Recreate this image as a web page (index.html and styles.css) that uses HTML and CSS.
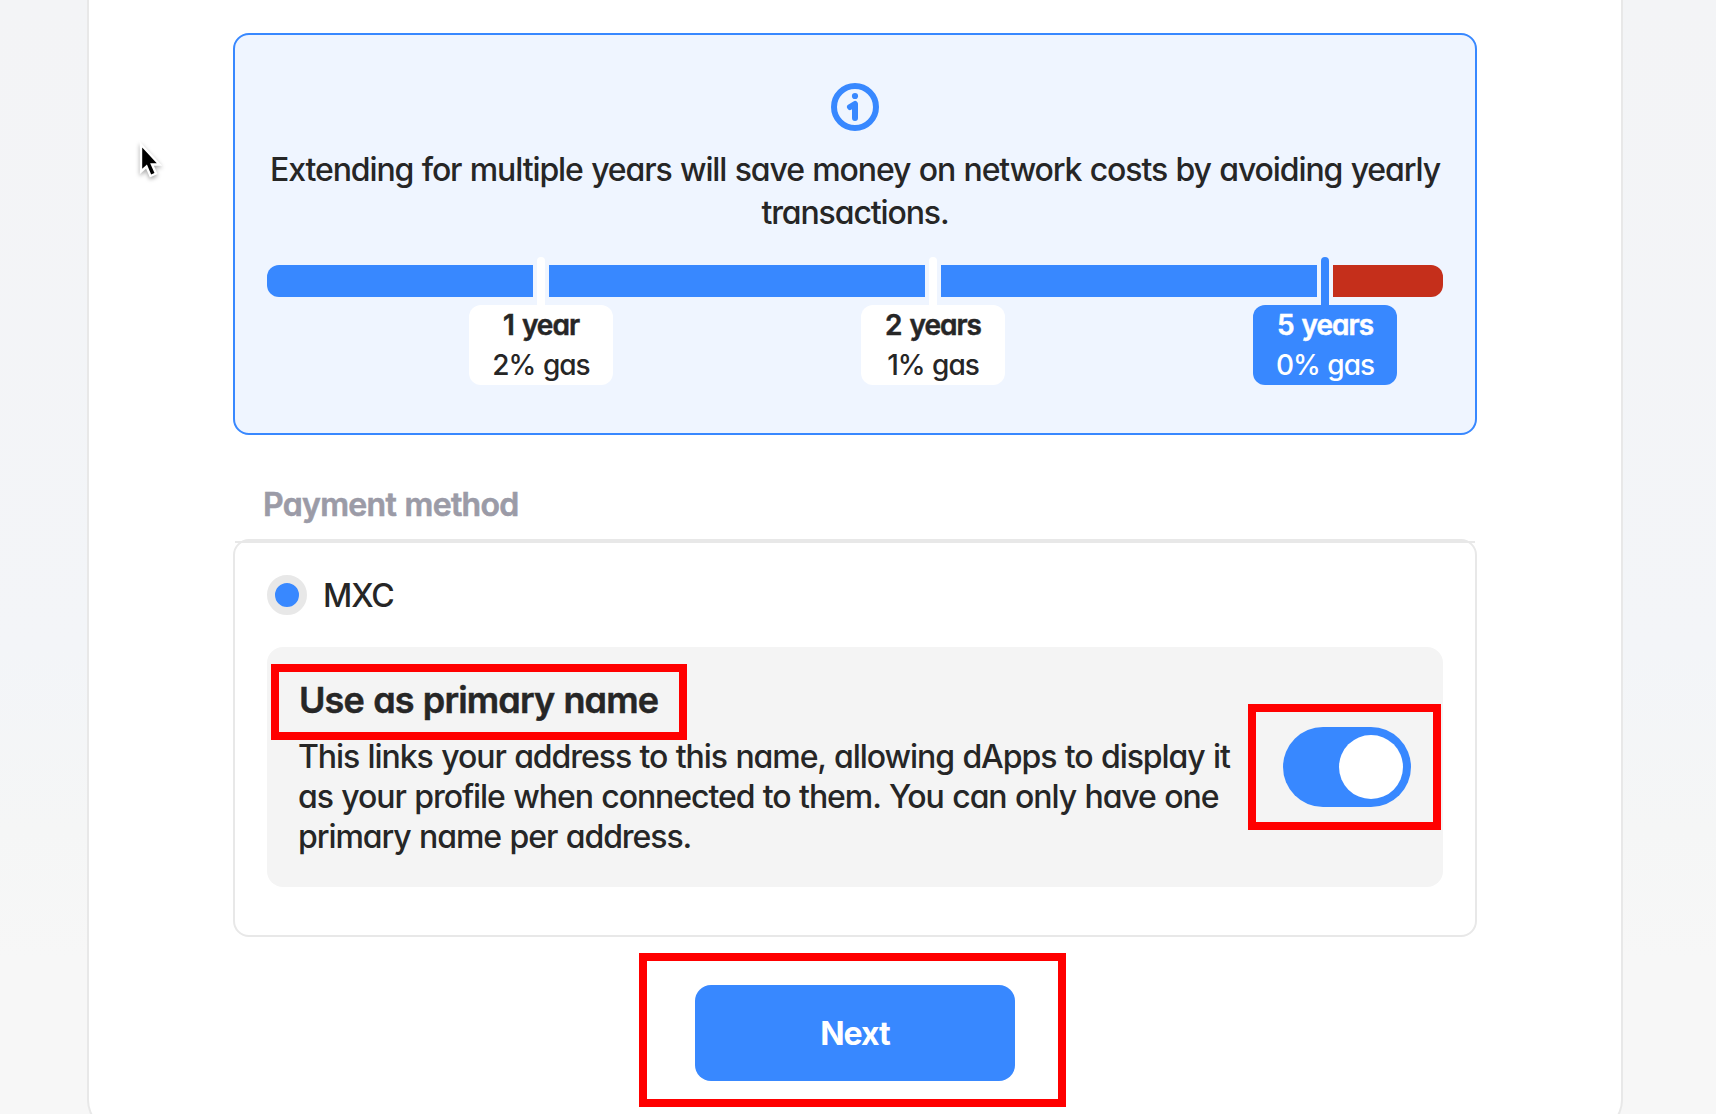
FILE: index.html
```html
<!DOCTYPE html>
<html lang="en">
<head>
<meta charset="utf-8">
<title>Register</title>
<link rel="stylesheet" href="styles.css">
</head>
<body>
<main class="card">
  <section class="info">
    <svg class="info-icon" viewBox="0 0 48 48" aria-hidden="true">
      <circle cx="24" cy="24" r="21" fill="none" stroke="#3888ff" stroke-width="6"/>
      <circle cx="24" cy="13" r="3.1" fill="#3888ff"/>
      <path d="M19 24 L24 21 V35" fill="none" stroke="#3888ff" stroke-width="6" stroke-linecap="round" stroke-linejoin="round"/>
    </svg>
    <p class="info-text"><span class="line">Extending for multiple years will save money on network costs by avoiding yearly</span><span class="line">transactions.</span></p>
    <div class="bar">
      <div class="segment first"></div>
      <div class="mark"><i class="tick"></i><div class="label"><b>1 year</b><span>2% gas</span></div></div>
      <div class="segment"></div>
      <div class="mark"><i class="tick"></i><div class="label"><b>2 years</b><span>1% gas</span></div></div>
      <div class="segment"></div>
      <div class="mark selected"><i class="tick"></i><div class="label"><b>5 years</b><span>0% gas</span></div></div>
      <div class="segment last"></div>
    </div>
  </section>

  <h2 class="heading">Payment method</h2>
  <section class="payment">
    <div class="divider"></div>
    <div class="option"><span class="radio"></span><span>MXC</span></div>
    <div class="primary">
      <div class="primary-copy">
        <h3 class="primary-title">Use as primary name</h3>
        <p class="primary-text"><span class="line">This links your address to this name, allowing dApps to display it</span><span class="line">as your profile when connected to them. You can only have one</span><span class="line">primary name per address.</span></p>
      </div>
      <div class="toggle"><span class="knob"></span></div>
    </div>
  </section>
  <button class="next">Next</button>
</main>

<div class="highlight highlight-title"></div>
<div class="highlight highlight-toggle"></div>
<div class="highlight highlight-next"></div>
<svg class="cursor" viewBox="0 0 30 42" aria-hidden="true">
  <path d="M3 3.5 V30.5 L8.5 25.5 L12.5 35 L18 32.5 L14 23.5 H21.5 Z" fill="#000" stroke="#fff" stroke-width="2.4"/>
</svg>
</body>
</html>
```
FILE: styles.css
```css
* { box-sizing: border-box; }
body {
  margin: 0;
  height: 1114px;
  overflow: hidden;
  position: relative;
  background: linear-gradient(#f3f4f6 0, #f3f5f8 650px, #f5f6f6 830px, #f7f7f7 960px);
  font-family: Inter, "Open Sans", sans-serif;
  font-feature-settings: "cv11";
  font-size: 32px;
  font-weight: 450;
  letter-spacing: -1.07px;
  word-spacing: 1px;
  color: #262626;
}
h2, h3, p { margin: 0; }
.card {
  width: 1536px;
  height: 1132px;
  margin-left: 87px;
  padding: 33px 144px 0;
  background: #fff;
  border: 2px solid #e8e8e8;
  border-top: 0;
  border-radius: 0 0 32px 32px;
  display: flex;
  flex-direction: column;
}
.line { display: block; white-space: nowrap; }
.info {
  height: 402px;
  padding: 48px 32px 0;
  display: flex;
  flex-direction: column;
  align-items: center;
  background: #eff5ff;
  border: 2px solid #3888ff;
  border-radius: 16px;
}
.info-icon { width: 48px; height: 48px; flex: none; }
.info-text { margin-top: 17px; line-height: 43px; text-align: center; letter-spacing: -1.11px; }
.bar { width: 1176px; margin-top: 31px; display: flex; }
.segment { width: 376px; height: 32px; background: #3888ff; }
.first { width: 266px; border-radius: 12px 0 0 12px; }
.last { width: 110px; background: #c52f1b; border-radius: 0 12px 12px 0; }
.mark {
  width: 16px;
  margin-top: -8px;
  display: flex;
  flex-direction: column;
  align-items: center;
}
.tick { width: 8px; height: 48px; background: #fff; border-radius: 4px 4px 0 0; }
.label {
  width: 144px;
  height: 80px;
  flex: none;
  display: flex;
  flex-direction: column;
  align-items: center;
  background: #fff;
  border-radius: 12px;
  font-size: 28px;
  line-height: 40px;
  letter-spacing: -1px;
  white-space: nowrap;
}
.label b { font-weight: 600; letter-spacing: -1px; word-spacing: 2px; -webkit-text-stroke: 0.5px; }
.selected .tick, .selected .label { background: #3888ff; }
.selected .label { color: #fff; }
.heading {
  height: 104px;
  padding: 48px 0 0 30px;
  font-size: 32px;
  line-height: 43px;
  font-weight: 600;
  letter-spacing: -0.67px;
  color: #9b9ba7;
  -webkit-text-stroke: 0.6px;
}
.payment {
  height: 398px;
  padding: 0 32px;
  border: 2px solid #e8e8e8;
  border-radius: 16px;
}
.divider { height: 2px; margin: 0 -32px; background: #e8e8e8; }
.option { height: 104px; display: flex; align-items: center; gap: 16px; }
.radio { width: 40px; height: 40px; border: 8px solid #e8e8e8; border-radius: 50%; background: #3888ff; }
.primary {
  height: 240px;
  padding: 0 32px;
  display: flex;
  align-items: center;
  justify-content: space-between;
  background: #f4f4f4;
  border-radius: 16px;
}
.primary-copy { width: 960px; padding-bottom: 2px; }
.primary-title {
  font-size: 36px;
  line-height: 48px;
  margin-bottom: 13px;
  font-weight: 600;
  letter-spacing: -0.87px;
  -webkit-text-stroke: 0.5px;
}
.primary-text { margin-left: -1px; line-height: 40px; }
.toggle { width: 128px; height: 80px; padding: 8px; display: flex; justify-content: flex-end; background: #3888ff; border-radius: 40px; }
.knob { width: 64px; height: 64px; background: #fff; border-radius: 50%; }
.next {
  width: 320px;
  height: 96px;
  margin: 48px auto 0;
  padding: 0;
  flex: none;
  border: 0;
  border-radius: 16px;
  background: #3888ff;
  color: #fff;
  font: inherit;
  font-weight: 700;
  letter-spacing: -1px;
}
.highlight { position: absolute; border: 8px solid #f00; }
.highlight-title { left: 271px; top: 664px; width: 416px; height: 76px; }
.highlight-toggle { left: 1248px; top: 704px; width: 193px; height: 126px; }
.highlight-next { left: 639px; top: 953px; width: 427px; height: 154px; }
.cursor { position: absolute; left: 138px; top: 141px; width: 30px; height: 42px; filter: drop-shadow(0 2px 2px rgba(0, 0, 0, .35)); }
```
